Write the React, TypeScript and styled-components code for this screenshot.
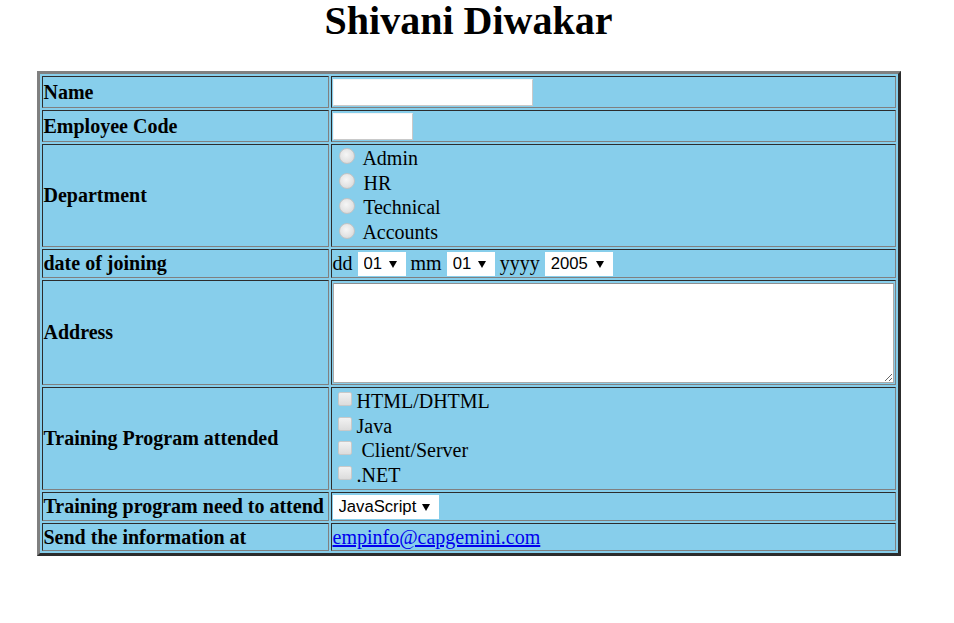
import React from "react";
import styled, { createGlobalStyle } from "styled-components";

const GlobalStyle = createGlobalStyle`
    body {
        margin: 0;
        background: #ffffff;
        color: #000000;
        font-family: "Liberation Serif", "Times New Roman", serif;
        font-size: 20px;
    }
`;

const Page = styled.div`
    width: 917px;
    margin: 0 10px;
`;

const Title = styled.h1`
    margin: 0 0 29px;
    font-size: 40px;
    line-height: 42px;
    font-weight: bold;
    text-align: center;
`;

const FormTable = styled.table`
    width: 864px;
    margin: 0 auto;
    border: 3px outset #808080;
    border-spacing: 2px;
    background: #87ceeb;
`;

const Row = styled.tr<{ $h: number }>`
    height: ${(p) => p.$h}px;
`;

const LabelCell = styled.td`
    width: 283px;
    padding: 1px;
    border: 1px inset #808080;
    font-weight: bold;
    white-space: nowrap;
    vertical-align: middle;
`;

const FieldCell = styled.td`
    padding: 1px;
    border: 1px inset #808080;
    vertical-align: middle;
`;

const TextInput = styled.input<{ $w: number }>`
    display: block;
    box-sizing: border-box;
    width: ${(p) => p.$w}px;
    height: 27px;
    margin: 0;
    border: 1px solid;
    border-color: #f4f4f4 #c9c9c9 #c9c9c9 #f4f4f4;
    background: #ffffff;
    font: 16.67px "Liberation Sans", Arial, sans-serif;
    outline: none;
`;

const OptionList = styled.div`
    display: flex;
    flex-direction: column;
`;

const OptionLine = styled.label`
    display: flex;
    align-items: center;
    height: 24.75px;
    white-space: pre;
`;

const Radio = styled.input.attrs({ type: "radio" })`
    appearance: none;
    box-sizing: border-box;
    width: 16px;
    height: 16px;
    margin: -4px 4px 0 6px;
    border-radius: 50%;
    border: 1px solid #c4c4c4;
    background: radial-gradient(circle at 45% 40%, #f6f6f6 0%, #e4e4e4 55%, #d2d2d2 100%);
`;

const Checkbox = styled.input.attrs({ type: "checkbox" })`
    appearance: none;
    box-sizing: border-box;
    width: 14px;
    height: 14px;
    margin: -5px 5px 0 5px;
    border-radius: 2px;
    border: 1px solid #c9c9c9;
    background: linear-gradient(#f2f2f2, #dcdcdc);
`;

const DateLine = styled.div`
    display: flex;
    align-items: center;
    gap: 5px;
    height: 25px;
`;

const SelectWrap = styled.span`
    position: relative;
    display: inline-block;
`;

const Select = styled.select<{ $w: number }>`
    appearance: none;
    display: block;
    box-sizing: border-box;
    width: ${(p) => p.$w}px;
    height: 24px;
    margin: 0;
    padding: 0 0 0 5px;
    border: 1px solid #ffffff;
    border-radius: 0;
    background: #ffffff;
    color: #000000;
    font: 16.67px "Liberation Sans", Arial, sans-serif;
    outline: none;
`;

const Arrow = styled.svg`
    position: absolute;
    right: 9px;
    top: 9px;
    pointer-events: none;
`;

const AddressBox = styled.textarea`
    display: block;
    box-sizing: border-box;
    width: 561px;
    height: 100px;
    margin: 0;
    border: 1px solid #a9a9a9;
    border-top-color: #8e8e8e;
    background: #ffffff;
    font: 16.67px "Liberation Mono", monospace;
    outline: none;
`;

const MailLink = styled.a`
    color: #0000ee;
    text-decoration: underline;
`;

const Dropdown = ({ value, width, options }: { value: string; width: number; options: string[] }) => (
    <SelectWrap>
        <Select $w={width} defaultValue={value}>
            {options.map((o) => (
                <option key={o}>{o}</option>
            ))}
        </Select>
        <Arrow width="8" height="7" viewBox="0 0 8 7">
            <path d="M0 0 H8 L4 7 Z" fill="#000" />
        </Arrow>
    </SelectWrap>
);

const days = Array.from({ length: 31 }, (_, i) => String(i + 1).padStart(2, "0"));
const months = days.slice(0, 12);
const years = Array.from({ length: 20 }, (_, i) => String(2000 + i));

const App = () => (
    <>
        <GlobalStyle />
        <Page>
            <Title>Shivani Diwakar</Title>
            <FormTable>
                <tbody>
                    <Row $h={32}>
                        <LabelCell>Name</LabelCell>
                        <FieldCell>
                            <TextInput $w={200} />
                        </FieldCell>
                    </Row>
                    <Row $h={32}>
                        <LabelCell>Employee Code</LabelCell>
                        <FieldCell>
                            <TextInput $w={80} />
                        </FieldCell>
                    </Row>
                    <Row $h={103}>
                        <LabelCell>Department</LabelCell>
                        <FieldCell>
                            <OptionList>
                                {["Admin", "HR", "Technical", "Accounts"].map((d) => (
                                    <OptionLine key={d}>
                                        <Radio name="dept" />
                                        {" " + d}
                                    </OptionLine>
                                ))}
                            </OptionList>
                        </FieldCell>
                    </Row>
                    <Row $h={29}>
                        <LabelCell>date of joining</LabelCell>
                        <FieldCell>
                            <DateLine>
                                <span>dd</span>
                                <Dropdown value="01" width={48} options={days} />
                                <span>mm</span>
                                <Dropdown value="01" width={48} options={months} />
                                <span>yyyy</span>
                                <Dropdown value="2005" width={68} options={years} />
                            </DateLine>
                        </FieldCell>
                    </Row>
                    <Row $h={105}>
                        <LabelCell>Address</LabelCell>
                        <FieldCell>
                            <AddressBox />
                        </FieldCell>
                    </Row>
                    <Row $h={103}>
                        <LabelCell>Training Program attended</LabelCell>
                        <FieldCell>
                            <OptionList>
                                {["HTML/DHTML", "Java", " Client/Server", ".NET"].map((t) => (
                                    <OptionLine key={t}>
                                        <Checkbox />
                                        {t}
                                    </OptionLine>
                                ))}
                            </OptionList>
                        </FieldCell>
                    </Row>
                    <Row $h={29}>
                        <LabelCell>Training program need to attend</LabelCell>
                        <FieldCell>
                            <Dropdown value="JavaScript" width={106} options={["JavaScript", "Java", "HTML", ".NET"]} />
                        </FieldCell>
                    </Row>
                    <Row $h={28}>
                        <LabelCell>Send the information at</LabelCell>
                        <FieldCell>
                            <MailLink href="mailto:empinfo@capgemini.com">empinfo@capgemini.com</MailLink>
                        </FieldCell>
                    </Row>
                </tbody>
            </FormTable>
        </Page>
    </>
);

export default App;
